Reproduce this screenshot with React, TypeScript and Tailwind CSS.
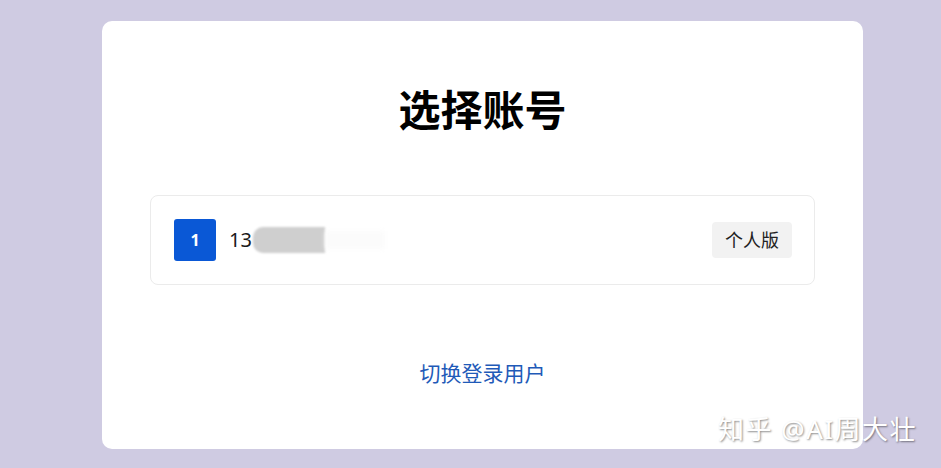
export default function App() {
  return (
    <div
      className="relative h-[468px] w-[941px] overflow-hidden bg-[#cfcbe2] pt-[21px] pl-[102px]"
      style={{ fontFamily: '"Noto Sans", "Noto Sans CJK SC", sans-serif' }}
    >
      <div className="flex h-[428px] w-[761px] flex-col items-center rounded-[10px] bg-white px-[48px]">
        <h1 className="mt-[58px] text-[42px] font-bold leading-[62px] text-black">选择账号</h1>
        <div className="mt-[54px] flex h-[90px] w-full items-center rounded-[8px] border border-[#ebebeb] pl-[23px] pr-[22px]">
          <div className="flex h-[42px] w-[42px] items-center justify-center rounded-[3px] bg-[#0a58d6] text-[16px] font-bold text-white">
            1
          </div>
          <span className="ml-[13px] text-[20px] text-[#1a1a1a]">13</span>
          <div className="ml-[1px] h-[26px] w-[72px] rounded-l-[10px] bg-[#cfcfcf] blur-[1px]" />
          <div className="h-[18px] w-[60px] bg-[#fbfbfb] blur-[2px]" />
          <div className="ml-auto flex h-[36px] w-[80px] items-center justify-center rounded-[4px] bg-[#f2f2f2] text-[18px] text-[#222]">
            个人版
          </div>
        </div>
        <a className="mt-[73px] text-[21px] text-[#1f5ab8]">切换登录用户</a>
      </div>
      <div
        className="absolute left-[718px] top-[410px] text-[26px] tracking-[1.5px] text-white"
        style={{ textShadow: "1px 1px 2px rgba(0,0,0,0.45)" }}
      >
        知乎 @AI周大壮
      </div>
    </div>
  );
}
